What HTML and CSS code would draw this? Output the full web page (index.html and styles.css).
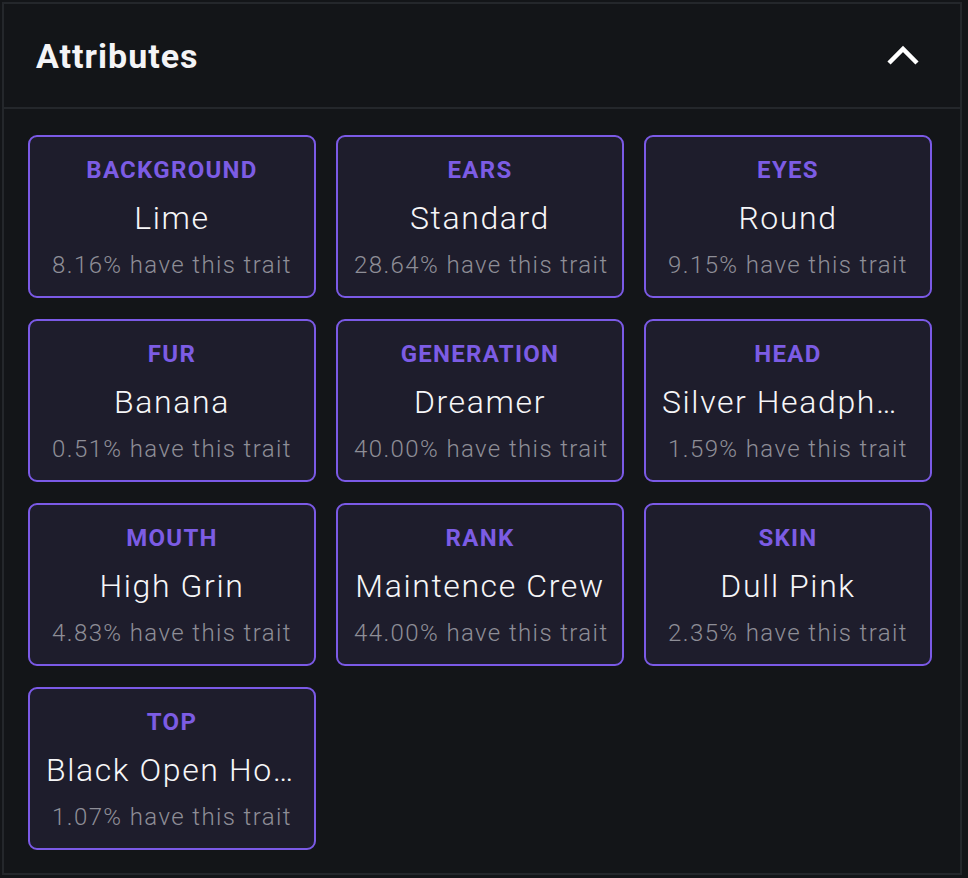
FILE: index.html
```html
<!DOCTYPE html>
<html lang="en">
<head>
<meta charset="utf-8">
<title>Attributes</title>
<link rel="stylesheet" href="styles.css">
</head>
<body>
<section class="panel">
  <header class="panel-head">
    <h2 class="panel-title">Attributes</h2>
    <svg class="chevron" width="34" height="22" viewBox="0 0 34 22" aria-hidden="true">
      <polyline points="3,19 17,5 31,19" fill="none" stroke="#ffffff" stroke-width="4.5" stroke-linecap="butt" stroke-linejoin="miter"/>
    </svg>
  </header>
  <div class="grid">
    <div class="card"><div class="label">BACKGROUND</div><div class="value">Lime</div><div class="trait">8.16% have this trait</div></div>
    <div class="card"><div class="label">EARS</div><div class="value">Standard</div><div class="trait">28.64% have this trait</div></div>
    <div class="card"><div class="label">EYES</div><div class="value">Round</div><div class="trait">9.15% have this trait</div></div>
    <div class="card"><div class="label">FUR</div><div class="value">Banana</div><div class="trait">0.51% have this trait</div></div>
    <div class="card"><div class="label">GENERATION</div><div class="value">Dreamer</div><div class="trait">40.00% have this trait</div></div>
    <div class="card"><div class="label">HEAD</div><div class="value">Silver Headphones</div><div class="trait">1.59% have this trait</div></div>
    <div class="card"><div class="label">MOUTH</div><div class="value">High Grin</div><div class="trait">4.83% have this trait</div></div>
    <div class="card"><div class="label">RANK</div><div class="value">Maintence Crew</div><div class="trait">44.00% have this trait</div></div>
    <div class="card"><div class="label">SKIN</div><div class="value">Dull Pink</div><div class="trait">2.35% have this trait</div></div>
    <div class="card"><div class="label">TOP</div><div class="value">Black Open Hoodie</div><div class="trait">1.07% have this trait</div></div>
  </div>
</section>
</body>
</html>
```

FILE: styles.css
```css
html, body {
  margin: 0;
  padding: 0;
  background: #131518;
}
body {
  padding: 2px 0 0 2px;
  font-family: Roboto, "Liberation Sans", sans-serif;
  color: #ffffff;
}
.panel {
  box-sizing: border-box;
  width: 960px;
  height: 873px;
  border: 2px solid #24272b;
  background: #131518;
}
.panel-head {
  box-sizing: border-box;
  height: 105px;
  border-bottom: 2px solid #24272b;
  display: flex;
  align-items: center;
  justify-content: space-between;
  padding: 0 40px 0 32px;
}
.panel-title {
  margin: 0;
  font-size: 34px;
  font-weight: 700;
  letter-spacing: 1px;
  color: #f4f4f6;
}
.chevron {
  display: block;
  margin-top: -1px;
}
.grid {
  display: grid;
  grid-template-columns: repeat(3, 288px);
  column-gap: 20px;
  row-gap: 21px;
  padding: 26px 0 0 24px;
}
.card {
  box-sizing: border-box;
  height: 163px;
  border: 2px solid #7b5ae6;
  border-radius: 9px;
  background: #1e1d2c;
  padding: 18px 16px 0;
  text-align: center;
  display: flex;
  flex-direction: column;
  min-width: 0;
}
.label {
  font-size: 24px;
  line-height: 30px;
  font-weight: 700;
  letter-spacing: 1.3px;
  color: #7c5ce4;
  margin-bottom: 13px;
}
.value {
  font-size: 32px;
  line-height: 40px;
  font-weight: 300;
  letter-spacing: 1.6px;
  color: #f6f6f8;
  white-space: nowrap;
  overflow: hidden;
  text-overflow: ellipsis;
  margin-bottom: 11px;
}
.trait {
  font-size: 24px;
  line-height: 32px;
  font-weight: 300;
  letter-spacing: 1.4px;
  color: #8e8e97;
  white-space: nowrap;
}
```
